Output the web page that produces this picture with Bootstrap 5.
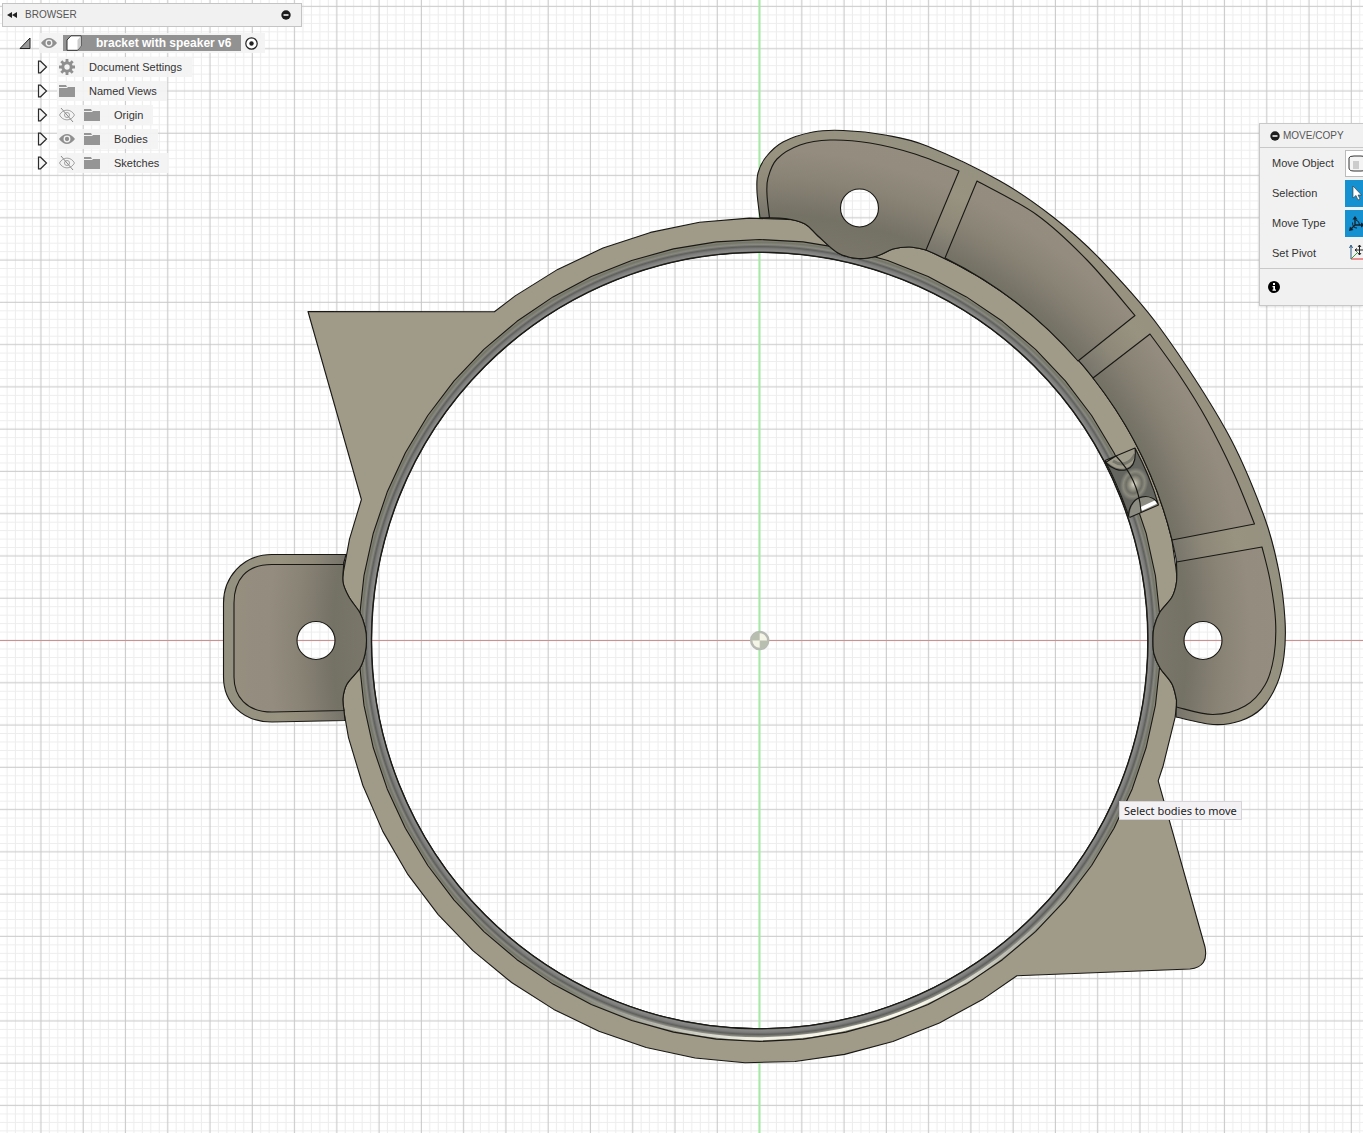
<!DOCTYPE html>
<html lang="en">
<head>
<meta charset="utf-8">
<meta name="viewport" content="width=device-width, initial-scale=1">
<title>bracket with speaker v6</title>
<link href="https://cdn.jsdelivr.net/npm/bootstrap@5.3.0/dist/css/bootstrap.min.css" rel="stylesheet">
<style>
  body { font-family: "Liberation Sans", Arial, sans-serif; font-size: 11px; line-height: 16px; color: #333; background: #fff; }
  .stage { overflow: hidden; }
  .canvas3d { z-index: 0; }
  .panel-layer { z-index: 1; pointer-events: none; }
  .panel-layer > * { pointer-events: auto; }
  .browser-panel { width: 300px; margin: 3px 0 0 2px; }
  .panel-head { height: 24px; color: #555; font-size: 10px; line-height: 22px; }
  .browser-head { background: #f1f1f1; border: 1px solid #c4c4c4; padding: 0 10px 0 4px; }
  .bare { border: 0; background: none; padding: 0; display: flex; align-items: center; color: inherit; flex: none; }
  .tree { padding: 4px 0 0 16px; }
  .tree ul { padding-left: 19px; }
  .tree-row { height: 24px; }
  .node-box { height: 20px; background: rgba(243,243,243,.92); padding: 0 10px 0 2px; margin-left: 8px; }
  .root-row .node-box { margin-left: 7px; padding-right: 7px; }
  .node-name { margin-left: 14px; white-space: nowrap; color: #333; text-decoration: none; }
  .root-name { background: #929292; color: #fff; height: 16px; padding: 0 10px 0 3px; margin: 0 4px 0 6px; font-size: 12px; }
  .root-name a { color: #fff; }
  .second-icon { margin-left: 9px; }
  svg { display: block; flex: none; }
  .move-panel { width: 104px; margin-top: 123px; background: #f1f1f1; border: 1px solid #c8c8c8; border-right: 0; overflow: hidden; box-shadow: 0 1px 2px rgba(0,0,0,.12); }
  .move-head { border-bottom: 1px solid #c8c8c8; padding-left: 10px; gap: 3px; white-space: nowrap; }
  .move-row { height: 30px; padding-left: 12px; white-space: nowrap; }
  .move-tool { width: 32px; height: 27px; margin-right: -14px; border: 0; padding: 0 0 0 2px; flex: none; background: #f1f1f1; }
  .tool-on { background: #1590d0; }
  .tool-plain { background: #fff; border: 1px solid #bbb; padding-left: 1px; }
  .move-foot { border-top: 1px solid #c8c8c8; height: 37px; padding-left: 8px; }
  .hint { left: 82.1%; top: 70.7%; z-index: 2; font-family: "Noto Sans", "Open Sans", sans-serif; font-size: 11px; line-height: 17px; color: #222; background: #f3f1f4; border: 1px solid #d6d4d8; padding: 0 4px; white-space: nowrap; }
  .edge { fill: none; stroke: #191814; stroke-width: 1.1; stroke-linejoin: round; }
</style>
<script src="https://cdn.jsdelivr.net/npm/bootstrap@5.3.0/dist/js/bootstrap.bundle.min.js"></script>
</head>
<body>
<main class="stage position-relative vh-100">

  <svg class="canvas3d position-absolute top-0 start-0 w-100 h-100" viewBox="0 0 1363 1133" preserveAspectRatio="xMidYMid slice" role="img" aria-label="Top view of the bracket">
    <defs>
      <pattern id="minor" x="755.3" y="636.3" width="8.454" height="8.454" patternUnits="userSpaceOnUse">
        <path d="M4.2 0V9M0 4.2H9" stroke="#000" stroke-opacity=".07" stroke-width="1" fill="none"/>
      </pattern>
      <pattern id="major" x="738.5" y="619.5" width="42.27" height="42.27" patternUnits="userSpaceOnUse">
        <path d="M21 0V43M0 21H43" stroke="#000" stroke-opacity=".16" stroke-width="1" fill="none"/>
      </pattern>
      <radialGradient id="lip" gradientUnits="userSpaceOnUse" cx="759.7" cy="640.5" r="402">
        <stop offset=".965" stop-color="#3a3b3a"/><stop offset=".969" stop-color="#8a8b88"/>
        <stop offset=".975" stop-color="#7d7e7b"/><stop offset=".980" stop-color="#5f605d"/>
        <stop offset=".985" stop-color="#898980"/><stop offset=".991" stop-color="#747569"/>
        <stop offset="1" stop-color="#a19c8b"/>
      </radialGradient>
      <radialGradient id="floor" gradientUnits="userSpaceOnUse" cx="759.7" cy="640.5" r="540">
        <stop offset=".72" stop-color="#7b786b"/><stop offset=".79" stop-color="#747165"/><stop offset=".86" stop-color="#8a8476"/>
        <stop offset=".91" stop-color="#938c7f"/><stop offset="1" stop-color="#979080"/>
      </radialGradient>
      <radialGradient id="rim" gradientUnits="userSpaceOnUse" cx="759.7" cy="640.5" r="540">
        <stop offset=".78" stop-color="#75726a"/><stop offset=".84" stop-color="#8d8878"/><stop offset=".9" stop-color="#989280"/><stop offset="1" stop-color="#949180"/>
      </radialGradient>
      <linearGradient id="glint" gradientUnits="userSpaceOnUse" x1="560" y1="0" x2="1110" y2="0">
        <stop offset="0" stop-color="#fff" stop-opacity="0"/><stop offset=".35" stop-color="#fffdf2" stop-opacity=".9"/>
        <stop offset=".65" stop-color="#fffdf2" stop-opacity=".95"/><stop offset="1" stop-color="#fff" stop-opacity="0"/>
      </linearGradient>
      <radialGradient id="bead"><stop offset="0" stop-color="#e4e2d4"/><stop offset=".25" stop-color="#a4a291"/><stop offset=".55" stop-color="#6e6e66"/><stop offset=".75" stop-color="#8b8a7e"/><stop offset="1" stop-color="#63645f"/></radialGradient>
      <mask id="holes" maskUnits="userSpaceOnUse" x="0" y="0" width="1363" height="1133">
        <rect width="1363" height="1133" fill="#fff"/>
        <circle cx="859.5" cy="208" r="19"/><circle cx="316" cy="640.5" r="19"/><circle cx="1203" cy="640.5" r="19"/>
      </mask>
    </defs>

    <rect width="1363" height="1133" fill="#fff"/>
    <rect width="1363" height="1133" fill="url(#minor)"/>
    <rect width="1363" height="1133" fill="url(#major)"/>
    <path d="M0 640.5H1363" stroke="#cf8f8f"/>
    <path d="M759.5 0V1133" stroke="#a4eaa4" stroke-width="2"/>

    <!-- origin marker -->
    <circle cx="759.7" cy="640.5" r="8.5" fill="#f4f5e6" stroke="#b7bab3" stroke-width="2.5"/>
    <path d="M759.7 640.5V632A8.5 8.5 0 0 0 751.2 640.5ZM759.7 640.5V649A8.5 8.5 0 0 0 768.2 640.5ZM759.7 632A8.5 8.5 0 0 0 751.2 640.5H759.7Z" fill="#b9bfb0"/>

    <!-- ring with its two corner ears -->
    <path id="ring" class="edge" style="fill:#a09a88;fill-rule:evenodd"/>
    <circle cx="759.7" cy="640.5" r="394.5" fill="none" stroke="url(#lip)" stroke-width="13"/>
    <path d="M560 984.8A398 398 0 0 0 1108 833.5" fill="none" stroke="url(#glint)" stroke-width="3"/>
    <path id="ringLine" class="edge"/>
    <circle class="edge" cx="759.7" cy="640.5" r="388.3"/>

    <!-- pockets and mounting lobes -->
    <g mask="url(#holes)">
      <path id="arm" class="edge" style="fill:url(#rim)"/>
      <path id="pocket1" class="edge" style="fill:url(#floor)"/>
      <path id="pocket2" class="edge" style="fill:url(#floor)"/>
      <path id="pocket3" class="edge" style="fill:url(#floor)"/>
      <path id="pocket4" class="edge" style="fill:url(#floor)"/>
      <path id="tab" class="edge" style="fill:url(#rim)"/>
      <path id="tabPocket" class="edge" style="fill:url(#floor)"/>
    </g>
    <circle class="edge" cx="859.5" cy="208" r="19"/>
    <circle class="edge" cx="316" cy="640.5" r="19"/>
    <circle class="edge" cx="1203" cy="640.5" r="19"/>

    <!-- cable notch -->
    <path d="M1105.500 460.500L1135 448L1148 474L1158.500 505L1129.500 517.500L1119 488Z" fill="#64655f"/>
    <ellipse cx="1134" cy="484" rx="14" ry="17" fill="url(#bead)" transform="rotate(20 1134 484)"/>
    <path d="M1105.500 460.500L1135 448C1138 472 1118 474 1105.500 460.500Z" fill="#a09c8c"/>
    <path d="M1113 461C1122 467 1131 463 1135 454" stroke="#77776c" stroke-width="3" fill="none"/>
    <path d="M1129.500 517.500C1130 492 1155 491 1158.500 505Z" fill="#8d8c82"/>
    <path d="M1141 509L1156 502" stroke="#fff" stroke-width="4"/>
    <path class="edge" d="M1105 460.500L1135 448C1138 474 1118 475 1105.500 462.500L1116 456M1128.500 515C1130 493 1154 492 1158.500 505L1129.500 517.500M1116 456Q1139 480 1141 512M1135 448Q1150 476 1158.500 505"/>
    <path class="edge" d="M1105 460.500Q1119 487 1129 517"/>
  </svg>

  <div class="panel-layer position-relative d-flex justify-content-between align-items-start">
    <aside class="browser-panel">
      <header class="browser-head panel-head d-flex align-items-center">
        <button class="bare" type="button" aria-label="Collapse browser"><svg width="10" height="8" viewBox="0 0 10 8"><path d="M5 1V7L0 4ZM10 1V7L5 4Z" fill="#222"/></svg></button>
        <span class="ms-2 me-auto">BROWSER</span>
        <button class="bare" type="button" aria-label="Minimise"><svg width="10" height="10" viewBox="0 0 10 10"><circle cx="5" cy="5" r="4.700" fill="#1c1c1c"/><path d="M2.500 5H7.500" stroke="#fff" stroke-width="1.500"/></svg></button>
      </header>
      <ul class="tree list-unstyled mb-0">
        <li>
          <div class="tree-row root-row d-flex align-items-center">
            <button class="bare" type="button" aria-label="Collapse"><svg width="14" height="14" viewBox="0 0 14 14"><path d="M12 2V12.500H2Z" fill="#999" stroke="#222"/></svg></button>
            <div class="node-box d-flex align-items-center">
              <button class="bare" type="button" aria-label="Toggle visibility"><svg width="16" height="16"><use href="#i-eye"/></svg></button>
              <div class="root-name d-flex align-items-center">
                <svg width="16" height="16" viewBox="0 0 16 16"><path d="M1 5L5 .8H15V11L11.500 15.300H1Z" fill="#fff" stroke="#333"/><path d="M11.500 5L15 1V11L11.500 15Z" fill="#ccc"/></svg>
                <a class="node-name fw-bold" href="#">bracket with speaker v6</a>
              </div>
              <input class="visually-hidden" type="radio" id="activeDoc" name="activeDoc" checked>
              <label for="activeDoc" aria-label="Active component"><svg width="13" height="13" viewBox="0 0 13 13"><circle cx="6.500" cy="6.500" r="5.700" fill="#fff" stroke="#222" stroke-width="1.200"/><circle cx="6.500" cy="6.500" r="2.200" fill="#222"/></svg></label>
            </div>
          </div>
          <ul class="list-unstyled">
            <li class="tree-row d-flex align-items-center">
              <button class="bare" type="button" aria-label="Expand"><svg width="12" height="14"><use href="#i-tri"/></svg></button>
              <div class="node-box d-flex align-items-center"><svg width="16" height="16"><use href="#i-gear"/></svg><a class="node-name" href="#">Document Settings</a></div>
            </li>
            <li class="tree-row d-flex align-items-center">
              <button class="bare" type="button" aria-label="Expand"><svg width="12" height="14"><use href="#i-tri"/></svg></button>
              <div class="node-box d-flex align-items-center"><svg width="16" height="16"><use href="#i-folder"/></svg><a class="node-name" href="#">Named Views</a></div>
            </li>
            <li class="tree-row d-flex align-items-center">
              <button class="bare" type="button" aria-label="Expand"><svg width="12" height="14"><use href="#i-tri"/></svg></button>
              <div class="node-box d-flex align-items-center"><button class="bare" type="button" aria-label="Show"><svg width="16" height="16"><use href="#i-eye-off"/></svg></button><svg class="second-icon" width="16" height="16"><use href="#i-folder"/></svg><a class="node-name" href="#">Origin</a></div>
            </li>
            <li class="tree-row d-flex align-items-center">
              <button class="bare" type="button" aria-label="Expand"><svg width="12" height="14"><use href="#i-tri"/></svg></button>
              <div class="node-box d-flex align-items-center"><button class="bare" type="button" aria-label="Hide"><svg width="16" height="16"><use href="#i-eye"/></svg></button><svg class="second-icon" width="16" height="16"><use href="#i-folder"/></svg><a class="node-name" href="#">Bodies</a></div>
            </li>
            <li class="tree-row d-flex align-items-center">
              <button class="bare" type="button" aria-label="Expand"><svg width="12" height="14"><use href="#i-tri"/></svg></button>
              <div class="node-box d-flex align-items-center"><button class="bare" type="button" aria-label="Show"><svg width="16" height="16"><use href="#i-eye-off"/></svg></button><svg class="second-icon" width="16" height="16"><use href="#i-folder"/></svg><a class="node-name" href="#">Sketches</a></div>
            </li>
          </ul>
        </li>
      </ul>
    </aside>

    <section class="move-panel">
      <header class="move-head panel-head d-flex align-items-center">
        <button class="bare" type="button" aria-label="Collapse panel"><svg width="10" height="10" viewBox="0 0 10 10"><circle cx="5" cy="5" r="4.700" fill="#1c1c1c"/><path d="M2.500 5H7.500" stroke="#fff" stroke-width="1.500"/></svg></button>
        <span>MOVE/COPY</span>
      </header>
      <div class="move-row d-flex align-items-center justify-content-between"><span>Move Object</span>
        <button class="move-tool tool-plain" type="button" aria-label="Bodies"><svg width="24" height="20" viewBox="0 0 24 20"><path d="M2 5Q2 3 7 3H14Q19 3 19 5V15Q19 18 14 18H7Q2 18 2 15Z" fill="#f4f4f4" stroke="#333"/><path d="M6 8H12V16H6Z" fill="#ccc"/></svg></button></div>
      <div class="move-row d-flex align-items-center justify-content-between"><span>Selection</span>
        <button class="move-tool tool-on" type="button" aria-label="Select"><svg width="24" height="20" viewBox="0 0 24 20"><path d="M6 3V15L9 12.500L11 17L13 16L11 12H14.500Z" fill="#fff" stroke="#333" stroke-width=".6"/></svg></button></div>
      <div class="move-row d-flex align-items-center justify-content-between"><span>Move Type</span>
        <button class="move-tool tool-on" type="button" aria-label="Free move"><svg width="24" height="20" viewBox="0 0 24 20"><path d="M8 12V5M8 12H15M8 12L4 16" stroke="#12202c" stroke-width="1.300" fill="none"/><path d="M8 3L10.500 6.500H5.500ZM18 12L14 9.500V14.500ZM2 18L3 13.500L6.500 17Z" fill="#12202c"/><path d="M9 7Q12.500 8 12.500 12M5.500 9.500Q5.500 15 10 15" stroke="#12202c" fill="none"/></svg></button></div>
      <div class="move-row d-flex align-items-center justify-content-between"><span>Set Pivot</span>
        <button class="move-tool" type="button" aria-label="Set pivot"><svg width="24" height="20" viewBox="0 0 24 20"><path d="M4 16V3M2.500 5L4 2L5.500 5" stroke="#2a5a80" fill="none"/><path d="M4 16H20" stroke="#d33"/><path d="M4 16L11 9" stroke="#3a9a3a"/><path d="M12.500 2V12M8 7H18M11 4L12.500 2L14 4M11 10L12.500 12L14 10M10 5.500L8 7L10 8.500M16 5.500L18 7L16 8.500" stroke="#222" fill="none"/></svg></button></div>
      <footer class="move-foot d-flex align-items-center">
        <button class="bare" type="button" aria-label="Information"><svg width="12" height="12" viewBox="0 0 12 12"><circle cx="6" cy="6" r="6" fill="#000"/><path d="M5 2H7V4H5ZM4.500 5H7V8.500H8V9.700H4.500V8.500H5.300V6.200H4.500Z" fill="#fff"/></svg></button>
      </footer>
    </section>
  </div>

  <div class="hint position-absolute" role="tooltip">Select bodies to move</div>
</main>

<svg class="d-none" aria-hidden="true">
  <symbol id="i-tri" viewBox="0 0 12 14"><path d="M1.500 1.200H3.500L9.500 7L3.500 12.800H1.500Z" fill="#f4f4f4" stroke="#2b2b2b" stroke-width="1.200"/></symbol>
  <symbol id="i-folder" viewBox="0 0 16 16"><path d="M0 2H7L8 4H0ZM0 5H8L9 4H16V14H0Z" fill="#959595"/></symbol>
  <symbol id="i-eye" viewBox="0 0 16 16"><path d="M0 8Q8-2 16 8Q8 18 0 8Z" fill="#8f8f8f"/><circle cx="8" cy="8" r="2.800" fill="none" stroke="#f3f3f3" stroke-width="1.300"/></symbol>
  <symbol id="i-eye-off" viewBox="0 0 16 16"><path d="M.5 8C4 1.500 12 1.500 15.500 8C12 14.500 4 14.500 .5 8Z" fill="none" stroke="#a2a2a2"/><circle cx="8" cy="8" r="2.500" fill="none" stroke="#a2a2a2"/><path d="M2 1L14 15" stroke="#8a8a8a"/></symbol>
  <symbol id="i-gear" viewBox="0 0 16 16"><g stroke="#8f8f8f"><circle cx="8" cy="8" r="4.200" fill="none" stroke-width="3"/><path d="M8 0V3M8 13V16M0 8H3M13 8H16M2.300 2.300L4.500 4.500M11.500 11.500L13.700 13.700M2.300 13.700L4.500 11.500M11.500 4.500L13.700 2.300" stroke-width="2.800" fill="none"/></g></symbol>
</svg>

<script>
  const CX = 759.7, CY = 640.5;
  const at = (r, deg) => [CX + r * Math.cos(deg * Math.PI / 180), CY + r * Math.sin(deg * Math.PI / 180)];
  // vertices of a faceted circle between two angles, both ends included
  function facets(r, from, to, sides, phase) {
    const step = 360 / sides, pts = [at(r, from)];
    for (let k = Math.ceil((from - phase) / step + 0.05); phase + k * step < to - 0.3; k++) pts.push(at(r, phase + k * step));
    pts.push(at(r, to));
    return pts;
  }
  const poly = pts => pts.map(p => p[0].toFixed(1) + ' ' + p[1].toFixed(1)).join('L');
  // spline through the points, continued from the first one
  function smooth(p) {
    let d = '';
    for (let i = 0; i < p.length - 1; i++) {
      const a = p[i - 1] || p[i], b = p[i], c = p[i + 1], e = p[i + 2] || c;
      d += `C${b[0] + (c[0] - a[0]) / 6} ${b[1] + (c[1] - a[1]) / 6} ${c[0] - (e[0] - b[0]) / 6} ${c[1] - (e[1] - b[1]) / 6} ${c[0]} ${c[1]}`;
    }
    return d;
  }
  const start = p => `M${p[0]} ${p[1]}`;
  const set = (id, d) => document.getElementById(id).setAttribute('d', d);

  // the ring is a true arc where the arm meets it, faceted elsewhere
  set('ring', 'M' + poly(facets(422.5, 231.1, 288, 53, 92)) + 'L' + poly(facets(424.5, 293, 346, 240, 0)) + 'L' +
    poly(facets(422.5, 350, 379.4, 53, 92)) + 'L1205 947Q1209 967 1190 969L' +
    poly(facets(422.5, 52.5, 199.5, 53, 92)) + 'L308 311.5Z' +
    'M371.700 640.500a388 388 0 1 0 776 0a388 388 0 1 0 -776 0Z');
  set('ringLine', 'M' + poly(facets(401, 0, 360, 58, 90)) + 'Z');

  const outer = [[760,218],[757,192],[758,173],[766,157],[783,142],[813,132],[843,130.500],[885,135],[927,146],[1000,181],[1053,217],[1100,259],[1160,328],[1227,432],[1264,516],[1279,572],[1285,620],[1284,656],[1277,684],[1262,708],[1240,721],[1213,724.500],[1176,717]];
  const scallopRight = [[1176.500,700],[1172,684],[1160,668],[1154,654],[1153,640],[1154,627],[1160,612],[1172,597],[1176.500,582],[1176.500,562],[1172,540]];
  const scallopTop = [[926,250],[910,247],[893,249],[877,256],[858,258.500],[838,253],[818,236],[805,224],[785,218.500],[760,218]];
  const arc = 'A424.500 424.500 0 0 0 ';
  set('arm', start(outer[0]) + smooth(outer) + 'L1176.500 700' + smooth(scallopRight) + arc + '926 250' + smooth(scallopTop) + 'Z');

  const p1 = [[769.500,218],[767,195],[768,178],[777,159],[800,145],[830,140],[870,143],[915,154],[959,171]];
  set('pocket1', start(p1[0]) + smooth(p1) + 'L926 250' + smooth(scallopTop) + 'Z');
  const p2 = [[977,181],[1037,215],[1087,260],[1135,315.500]];
  set('pocket2', start(p2[0]) + smooth(p2) + 'L1078 361' + arc + '945 258Z');
  const p3 = [[1150,334],[1180,376],[1207,420],[1234,474],[1254.500,524]];
  set('pocket3', start(p3[0]) + smooth(p3) + 'L1172 540' + arc + '1093 378Z');
  const p4 = [[1262,547],[1270,580],[1275.500,620],[1274,656],[1265,685],[1245,706],[1213,714.500],[1176.500,707]];
  set('pocket4', start(p4[0]) + smooth(p4) + 'L1176.500 700' + smooth(scallopRight.slice(0, -1)) + 'Z');

  const scallopLeft = [[344,562],[343,582],[349,597],[360,613],[365,627],[366.500,640],[365,654],[360,668],[347,684],[343,698],[344,711]];
  set('tab', 'M346 554.500H272C242 554.500 223.500 578 223.500 603V677C223.500 702 242 722 272 722L345 720.500L344 711' + smooth([...scallopLeft].reverse()) + 'Z');
  set('tabPocket', 'M344 564.500H272C246 564.500 234 580 234 603V677C234 696 246 712 272 712L344 710.500' + smooth([...scallopLeft].reverse()) + 'Z');
</script>
</body>
</html>
